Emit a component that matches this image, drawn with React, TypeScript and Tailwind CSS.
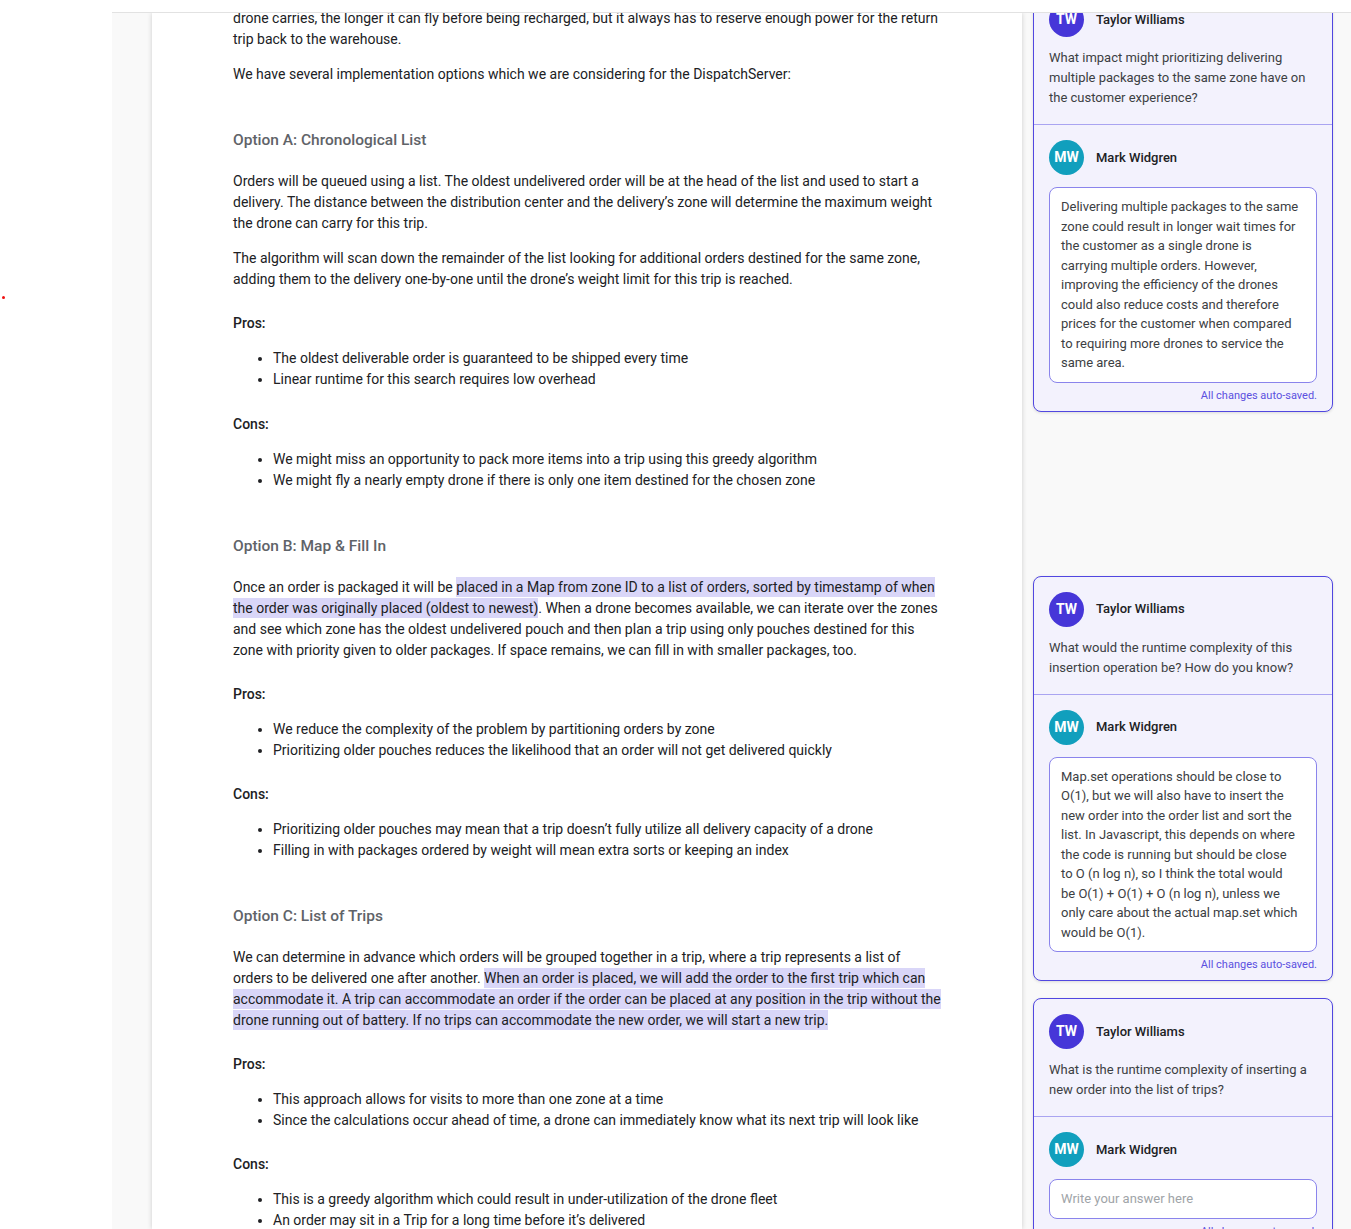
import React from 'react';

const HL = 'bg-[#d9d6f8] py-[2px] [box-decoration-break:clone]';

function Heading({ children }: { children: React.ReactNode }) {
  return <h3 className="mt-[45px] text-[15.5px] leading-[21px] font-medium text-[#5f6368]">{children}</h3>;
}

function Label({ children, className = 'mt-[23px]' }: { children: React.ReactNode; className?: string }) {
  return <p className={`font-medium text-[#202124] ${className}`}>{children}</p>;
}

function Bullets({ items }: { items: string[] }) {
  return (
    <ul className="mt-[14px] list-disc pl-[40px]">
      {items.map((item) => (
        <li key={item}>{item}</li>
      ))}
    </ul>
  );
}

function Avatar({ initials, color }: { initials: string; color: string }) {
  return (
    <div className={`flex h-[35px] w-[35px] shrink-0 items-center justify-center rounded-full text-[14px] font-bold text-white ${color}`}>
      {initials}
    </div>
  );
}

function Person({ initials, color, name }: { initials: string; color: string; name: string }) {
  return (
    <div className="flex items-center gap-[12px]">
      <Avatar initials={initials} color={color} />
      <span className="text-[13px] font-medium text-[#202124]">{name}</span>
    </div>
  );
}

function Lines({ lines }: { lines: string[] }) {
  return (
    <>
      {lines.map((l, i) => (
        <React.Fragment key={i}>
          {l}
          {i < lines.length - 1 && <br />}
        </React.Fragment>
      ))}
    </>
  );
}

function CommentCard({ question, answer, className = '' }: { question: string[]; answer?: string[]; className?: string }) {
  return (
    <div className={`rounded-[8px] border border-[#5147e0] bg-[#f3f2fd] shadow-[0_1px_3px_rgba(0,0,0,0.12)] ${className}`}>
      <div className="px-[15px] pt-[15px] pb-[16px]">
        <Person initials="TW" color="bg-[#4636d8]" name="Taylor Williams" />
        <p className="mt-[11px] whitespace-nowrap text-[13px] leading-[20px] text-[#3c4043]">
          <Lines lines={question} />
        </p>
      </div>
      <div className="border-t border-[#a9a4f1] px-[15px] pt-[15px] pb-[8px]">
        <Person initials="MW" color="bg-[#119fbd]" name="Mark Widgren" />
        {answer ? (
          <div className="mt-[12px] rounded-[8px] border border-[#8a84ec] bg-white px-[11px] py-[9px] whitespace-nowrap text-[13px] leading-[19.5px] text-[#3c4043]">
            <Lines lines={answer} />
          </div>
        ) : (
          <div className="mt-[12px] flex h-[40px] items-center rounded-[8px] border border-[#8a84ec] bg-white px-[11px] text-[13px] text-[#a0a4a8]">
            Write your answer here
          </div>
        )}
        <p className="mt-[6px] text-right text-[11px] leading-[14px] text-[#5b50e0]">All changes auto-saved.</p>
      </div>
    </div>
  );
}

export default function App() {
  return (
    <div className="flex h-[1229px] overflow-hidden bg-white font-['Roboto',sans-serif]">
      <div className="relative w-[112px] shrink-0">
        <span className="absolute left-[2px] top-[296px] h-[3px] w-[3px] rounded-full bg-[#f01010]" />
      </div>

      <div className="mt-[12px] flex h-[1217px] flex-1 overflow-hidden border-t border-[#e2e2e2] bg-[#f9f9f9]">
        <div className="w-[40px] shrink-0" />

        <main className="w-[870px] shrink-0 bg-white pl-[81px] shadow-[0_0_5px_rgba(0,0,0,0.18)]">
          <div className="-mt-[5px] w-[720px] text-[14px] leading-[21px] text-[#202124]">
            <p>
              drone carries, the longer it can fly before being recharged, but it always has to reserve enough power for the return
              <br />
              trip back to the warehouse.
            </p>
            <p className="mt-[14px]">We have several implementation options which we are considering for the DispatchServer:</p>

            <Heading>Option A: Chronological List</Heading>
            <p className="mt-[20px]">
              Orders will be queued using a list. The oldest undelivered order will be at the head of the list and used to start a
              <br />
              delivery. The distance between the distribution center and the delivery’s zone will determine the maximum weight
              <br />
              the drone can carry for this trip.
            </p>
            <p className="mt-[14px]">
              The algorithm will scan down the remainder of the list looking for additional orders destined for the same zone,
              <br />
              adding them to the delivery one-by-one until the drone’s weight limit for this trip is reached.
            </p>
            <Label>Pros:</Label>
            <Bullets
              items={[
                'The oldest deliverable order is guaranteed to be shipped every time',
                'Linear runtime for this search requires low overhead',
              ]}
            />
            <Label className="mt-[24px]">Cons:</Label>
            <Bullets
              items={[
                'We might miss an opportunity to pack more items into a trip using this greedy algorithm',
                'We might fly a nearly empty drone if there is only one item destined for the chosen zone',
              ]}
            />

            <Heading>Option B: Map &amp; Fill In</Heading>
            <p className="mt-[20px]">
              Once an order is packaged it will be{' '}
              <span className={HL}>
                placed in a Map from zone ID to a list of orders, sorted by timestamp of when
                <br />
                the order was originally placed (oldest to newest)
              </span>
              . When a drone becomes available, we can iterate over the zones
              <br />
              and see which zone has the oldest undelivered pouch and then plan a trip using only pouches destined for this
              <br />
              zone with priority given to older packages. If space remains, we can fill in with smaller packages, too.
            </p>
            <Label>Pros:</Label>
            <Bullets
              items={[
                'We reduce the complexity of the problem by partitioning orders by zone',
                'Prioritizing older pouches reduces the likelihood that an order will not get delivered quickly',
              ]}
            />
            <Label>Cons:</Label>
            <Bullets
              items={[
                'Prioritizing older pouches may mean that a trip doesn’t fully utilize all delivery capacity of a drone',
                'Filling in with packages ordered by weight will mean extra sorts or keeping an index',
              ]}
            />

            <Heading>Option C: List of Trips</Heading>
            <p className="mt-[20px]">
              We can determine in advance which orders will be grouped together in a trip, where a trip represents a list of
              <br />
              orders to be delivered one after another.{' '}
              <span className={HL}>
                When an order is placed, we will add the order to the first trip which can
                <br />
                accommodate it. A trip can accommodate an order if the order can be placed at any position in the trip without the
                <br />
                drone running out of battery. If no trips can accommodate the new order, we will start a new trip.
              </span>
            </p>
            <Label>Pros:</Label>
            <Bullets
              items={[
                'This approach allows for visits to more than one zone at a time',
                'Since the calculations occur ahead of time, a drone can immediately know what its next trip will look like',
              ]}
            />
            <Label>Cons:</Label>
            <Bullets
              items={[
                'This is a greedy algorithm which could result in under-utilization of the drone fleet',
                'An order may sit in a Trip for a long time before it’s delivered',
              ]}
            />
          </div>
        </main>

        <aside className="flex-1 pl-[11px]">
          <div className="-mt-[27px] w-[300px]">
            <CommentCard
              question={['What impact might prioritizing delivering', 'multiple packages to the same zone have on', 'the customer experience?']}
              answer={[
                'Delivering multiple packages to the same',
                'zone could result in longer wait times for',
                'the customer as a single drone is',
                'carrying multiple orders. However,',
                'improving the efficiency of the drones',
                'could also reduce costs and therefore',
                'prices for the customer when compared',
                'to requiring more drones to service the',
                'same area.',
              ]}
            />
            <CommentCard
              className="mt-[164px]"
              question={['What would the runtime complexity of this', 'insertion operation be? How do you know?']}
              answer={[
                'Map.set operations should be close to',
                'O(1), but we will also have to insert the',
                'new order into the order list and sort the',
                'list. In Javascript, this depends on where',
                'the code is running but should be close',
                'to O (n log n), so I think the total would',
                'be O(1) + O(1) + O (n log n), unless we',
                'only care about the actual map.set which',
                'would be O(1).',
              ]}
            />
            <CommentCard
              className="mt-[17px]"
              question={['What is the runtime complexity of inserting a', 'new order into the list of trips?']}
            />
          </div>
        </aside>
      </div>
    </div>
  );
}
